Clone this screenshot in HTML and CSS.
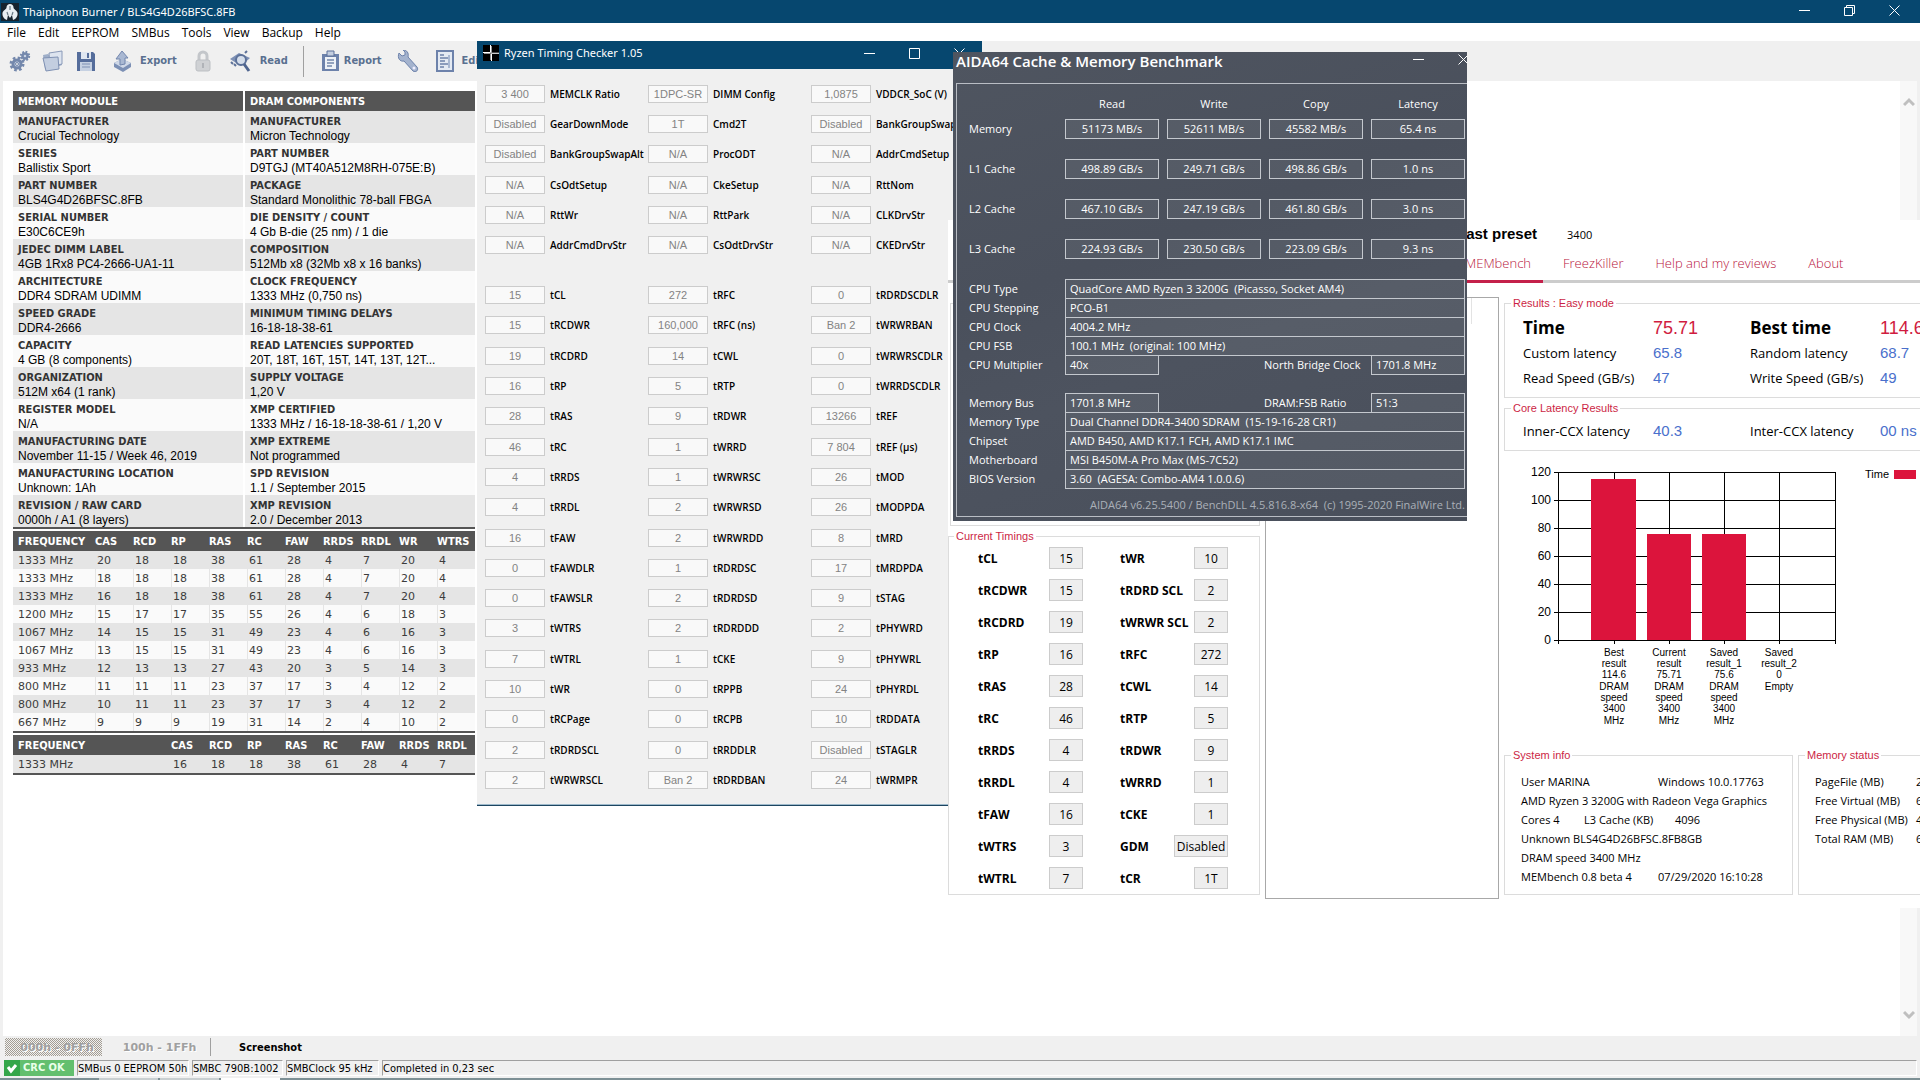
FILE: index.html
```html
<!DOCTYPE html>
<html lang="en">
<head>
<meta charset="utf-8">
<title>Thaiphoon Burner</title>
<link rel="stylesheet" href="styles.css">
</head>
<body>
<div class="desktop">

<main class="burner">
  <header class="titlebar">
    <svg class="app-icon" width="18" height="18" viewBox="0 0 18 18"><rect width="18" height="18" fill="#16232e"/><path d="M9 1c2 0 3.500 1.500 3.500 3.500S16 7 16.500 10 15 16 12 17l-1-5-2 3-2-3-1 5c-3-1-5-4-4.500-7S5.500 6.500 5.500 4.500 7 1 9 1z" fill="#e8eef2"/><path d="M9 3v4M6 9l1 3M12 9l-1 3" stroke="#6a7a86" stroke-width="1.200"/></svg>
    <h1>Thaiphoon Burner / BLS4G4D26BFSC.8FB</h1>
    <div class="win-buttons">
      <button aria-label="Minimize"><svg width="11" height="11"><path d="M0 5.500h11" stroke="#fff"/></svg></button>
      <button aria-label="Restore"><svg width="11" height="11" fill="none" stroke="#fff"><path d="M.5 2.500h8v8h-8zM2.500 2.500v-2h8v8h-2"/></svg></button>
      <button aria-label="Close"><svg width="11" height="11"><path d="M.5.5l10 10M10.500.5l-10 10" stroke="#fff"/></svg></button>
    </div>
  </header>
  <nav class="menu">
    <button>File</button><button>Edit</button><button>EEPROM</button><button>SMBus</button><button>Tools</button><button>View</button><button>Backup</button><button>Help</button>
  </nav>
  <div class="toolbar">
    <div class="tools-left">
      <button aria-label="Settings"><svg width="22" height="22" viewBox="0 0 22 22" fill="none" stroke="#7488ac"><circle cx="8" cy="14" r="4" stroke-width="3" fill="#c9d3e4"/><circle cx="8" cy="14" r="6" stroke-width="3" stroke-dasharray="2.500 2.200"/><circle cx="8" cy="14" r="1.500" fill="#eee"/><circle cx="16" cy="6" r="2.500" stroke-width="2.500" fill="#c9d3e4"/><circle cx="16" cy="6" r="4.200" stroke-width="2" stroke-dasharray="1.800 1.500"/></svg></button>
      <button aria-label="Open"><svg width="22" height="22" viewBox="0 0 22 22"><path d="M1 5l5-1 2 2 12-4v13L8 20 3 19z" fill="#9fafc9"/><path d="M7 3l13-2v13l-12 3z" fill="#dde4ef" stroke="#8a9ab8"/><path d="M1 8l15-1 1 12-13 2z" fill="#c3cee0" stroke="#7f91b3"/></svg></button>
      <button aria-label="Save"><svg width="22" height="22" viewBox="0 0 22 22"><path d="M2 2h16l2 2v17H2z" fill="#556d9b"/><path d="M6 2h10v7H6z" fill="#dfe6f0"/><path d="M12 3h2v5h-2z" fill="#556d9b"/><path d="M5 12h12v9H5z" fill="#c6d1e2"/><path d="M7 14h8M7 17h8" stroke="#7e91b4"/></svg></button>
    </div>
    <button><svg width="22" height="22" viewBox="0 0 22 22"><path d="M2 13l8-4 9 4v4l-8 5-9-5z" fill="#7c90b5"/><path d="M2 13l8-4 9 4-8 5z" fill="#cfd8e7"/><path d="M10 1l6 7h-3v6l-5 1V9H4z" fill="#a9b8d2" stroke="#7387ae"/></svg><span>Export</span></button>
    <button aria-label="Lock"><svg width="22" height="22" viewBox="0 0 22 22"><path d="M7 11V6a4 4 0 018 0v5" fill="none" stroke="#c3c6ca" stroke-width="3"/><rect x="4" y="10" width="14" height="11" rx="2" fill="#cfd1d4" stroke="#bcbfc3"/><path d="M11 13v5" stroke="#b0b3b8" stroke-width="2"/></svg></button>
    <button class="loose"><svg width="22" height="22" viewBox="0 0 22 22"><path d="M1 9l9-6 11 5-9 8z" fill="#7d90b5"/><path d="M2 12l2 2m1 0l2 2M16 3l2-2" stroke="#5c7199" stroke-width="2"/><circle cx="12" cy="10" r="5" fill="#d5deeb" stroke="#5c7199" stroke-width="2"/><path d="M15 14l5 7" stroke="#4f658f" stroke-width="3"/></svg><span>Read</span></button>
    <i class="sep"></i>
    <button class="tight"><svg width="22" height="22" viewBox="0 0 22 22"><rect x="3" y="4" width="17" height="17" fill="#6d82ab"/><path d="M6 7h11v12H6z" fill="#eef2f7"/><path d="M8 1h7v5H8z" fill="#c3cee0" stroke="#5c7199"/><path d="M8 10h7M8 13h7M8 16h5" stroke="#7488ac" stroke-width="1.500"/></svg><span>Report</span></button>
    <button aria-label="Tools"><svg width="22" height="22" viewBox="0 0 22 22"><path d="M2 3l3 3 3-1V2L6 0c4 0 6 3 5 7l9 10c2 3-1 6-4 4L7 11C3 12 0 8 2 3z" fill="#a4b3ce" stroke="#6d82ab"/><circle cx="17" cy="18" r="1.500" fill="#eef"/></svg></button>
    <button><svg width="22" height="22" viewBox="0 0 22 22"><path d="M3 1h16v20H3z" fill="#e4eaf3" stroke="#6d82ab" stroke-width="2"/><path d="M6 5h4M6 8h9M6 11h5M6 14h8M6 17h4" stroke="#6d82ab" stroke-width="1.500"/><path d="M15 5v13" stroke="#a9b8d2" stroke-width="2"/></svg><span>Editor</span></button>
  </div>

  <div class="workspace">
    <div class="report">
      <table class="module">
        <thead><tr><th>MEMORY MODULE</th><th>DRAM COMPONENTS</th></tr></thead>
        <tbody>
          <tr><td><b>MANUFACTURER</b>Crucial Technology</td><td><b>MANUFACTURER</b>Micron Technology</td></tr>
          <tr><td><b>SERIES</b>Ballistix Sport</td><td><b>PART NUMBER</b>D9TGJ (MT40A512M8RH-075E:B)</td></tr>
          <tr><td><b>PART NUMBER</b>BLS4G4D26BFSC.8FB</td><td><b>PACKAGE</b>Standard Monolithic 78-ball FBGA</td></tr>
          <tr><td><b>SERIAL NUMBER</b>E30C6CE9h</td><td><b>DIE DENSITY / COUNT</b>4 Gb B-die (25 nm) / 1 die</td></tr>
          <tr><td><b>JEDEC DIMM LABEL</b>4GB 1Rx8 PC4-2666-UA1-11</td><td><b>COMPOSITION</b>512Mb x8 (32Mb x8 x 16 banks)</td></tr>
          <tr><td><b>ARCHITECTURE</b>DDR4 SDRAM UDIMM</td><td><b>CLOCK FREQUENCY</b>1333 MHz (0,750 ns)</td></tr>
          <tr><td><b>SPEED GRADE</b>DDR4-2666</td><td><b>MINIMUM TIMING DELAYS</b>16-18-18-38-61</td></tr>
          <tr><td><b>CAPACITY</b>4 GB (8 components)</td><td><b>READ LATENCIES SUPPORTED</b>20T, 18T, 16T, 15T, 14T, 13T, 12T...</td></tr>
          <tr><td><b>ORGANIZATION</b>512M x64 (1 rank)</td><td><b>SUPPLY VOLTAGE</b>1,20 V</td></tr>
          <tr><td><b>REGISTER MODEL</b>N/A</td><td><b>XMP CERTIFIED</b>1333 MHz / 16-18-18-38-61 / 1,20 V</td></tr>
          <tr><td><b>MANUFACTURING DATE</b>November 11-15 / Week 46, 2019</td><td><b>XMP EXTREME</b>Not programmed</td></tr>
          <tr><td><b>MANUFACTURING LOCATION</b>Unknown: 1Ah</td><td><b>SPD REVISION</b>1.1 / September 2015</td></tr>
          <tr><td><b>REVISION / RAW CARD</b>0000h / A1 (8 layers)</td><td><b>XMP REVISION</b>2.0 / December 2013</td></tr>
        </tbody>
      </table>
      <table class="freq">
        <thead><tr><th>FREQUENCY</th><th>CAS</th><th>RCD</th><th>RP</th><th>RAS</th><th>RC</th><th>FAW</th><th>RRDS</th><th>RRDL</th><th>WR</th><th>WTRS</th></tr></thead>
        <tbody>
          <tr><td>1333 MHz</td><td>20</td><td>18</td><td>18</td><td>38</td><td>61</td><td>28</td><td>4</td><td>7</td><td>20</td><td>4</td></tr>
          <tr><td>1333 MHz</td><td>18</td><td>18</td><td>18</td><td>38</td><td>61</td><td>28</td><td>4</td><td>7</td><td>20</td><td>4</td></tr>
          <tr><td>1333 MHz</td><td>16</td><td>18</td><td>18</td><td>38</td><td>61</td><td>28</td><td>4</td><td>7</td><td>20</td><td>4</td></tr>
          <tr><td>1200 MHz</td><td>15</td><td>17</td><td>17</td><td>35</td><td>55</td><td>26</td><td>4</td><td>6</td><td>18</td><td>3</td></tr>
          <tr><td>1067 MHz</td><td>14</td><td>15</td><td>15</td><td>31</td><td>49</td><td>23</td><td>4</td><td>6</td><td>16</td><td>3</td></tr>
          <tr><td>1067 MHz</td><td>13</td><td>15</td><td>15</td><td>31</td><td>49</td><td>23</td><td>4</td><td>6</td><td>16</td><td>3</td></tr>
          <tr><td>933 MHz</td><td>12</td><td>13</td><td>13</td><td>27</td><td>43</td><td>20</td><td>3</td><td>5</td><td>14</td><td>3</td></tr>
          <tr><td>800 MHz</td><td>11</td><td>11</td><td>11</td><td>23</td><td>37</td><td>17</td><td>3</td><td>4</td><td>12</td><td>2</td></tr>
          <tr><td>800 MHz</td><td>10</td><td>11</td><td>11</td><td>23</td><td>37</td><td>17</td><td>3</td><td>4</td><td>12</td><td>2</td></tr>
          <tr><td>667 MHz</td><td>9</td><td>9</td><td>9</td><td>19</td><td>31</td><td>14</td><td>2</td><td>4</td><td>10</td><td>2</td></tr>
        </tbody>
      </table>
      <table class="freq xmp">
        <thead><tr><th>FREQUENCY</th><th>CAS</th><th>RCD</th><th>RP</th><th>RAS</th><th>RC</th><th>FAW</th><th>RRDS</th><th>RRDL</th></tr></thead>
        <tbody><tr><td>1333 MHz</td><td>16</td><td>18</td><td>18</td><td>38</td><td>61</td><td>28</td><td>4</td><td>7</td></tr></tbody>
      </table>
    </div>
    <div class="scrollbar">
      <svg width="12" height="10"><path d="M1 8l5-5 5 5" fill="none" stroke="#bfbfbf" stroke-width="3"/></svg>
      <svg width="12" height="10"><path d="M1 2l5 5 5-5" fill="none" stroke="#bfbfbf" stroke-width="3"/></svg>
    </div>
  </div>

  <div class="pages">
    <button class="page pressed" disabled>000h - 0FFh</button>
    <button class="page" disabled>100h - 1FFh</button>
    <i class="sep"></i>
    <button class="page shot">Screenshot</button>
  </div>
  <footer class="status">
    <span class="crc"><svg width="16" height="16"><rect width="16" height="16" fill="#35a64a"/><path d="M4 7l3 4 5-6" fill="none" stroke="#fff" stroke-width="3"/></svg>CRC OK</span>
    <span class="cell c1">SMBus 0 EEPROM 50h</span>
    <span class="cell c2">SMBC 790B:1002</span>
    <span class="cell c3">SMBClock 95 kHz</span>
    <span class="cell c4">Completed in 0,23 sec</span>
  </footer>
  <div class="taskbar"><i></i><i></i><i class="active"></i></div>
</main>

<section class="rtc">
  <header class="titlebar">
    <svg class="app-icon" width="16" height="16"><rect width="16" height="16" fill="#000"/><path d="M7.500 0v7.500H0M16 8.500H8.500V16" fill="none" stroke="#fff" /><path d="M8.500 1v7H16M7.500 15V8.500H1" fill="none" stroke="#999"/></svg>
    <h2>Ryzen Timing Checker 1.05</h2>
    <div class="win-buttons">
      <button aria-label="Minimize"><svg width="11" height="11"><path d="M0 5.500h11" stroke="#fff"/></svg></button>
      <button aria-label="Maximize"><svg width="11" height="11"><path d="M.5.5h10v10H.5z" fill="none" stroke="#fff"/></svg></button>
      <button aria-label="Close"><svg width="11" height="11"><path d="M.5.5l10 10M10.500.5l-10 10" stroke="#fff"/></svg></button>
    </div>
  </header>
  <div class="fields config">
    <label><input value="3 400" disabled>MEMCLK Ratio</label><label><input value="1DPC-SR" disabled>DIMM Config</label><label><input value="1,0875" disabled>VDDCR_SoC (V)</label>
    <label><input value="Disabled" disabled>GearDownMode</label><label><input value="1T" disabled>Cmd2T</label><label><input value="Disabled" disabled>BankGroupSwap</label>
    <label><input value="Disabled" disabled>BankGroupSwapAlt</label><label><input value="N/A" disabled>ProcODT</label><label><input value="N/A" disabled>AddrCmdSetup</label>
    <label><input value="N/A" disabled>CsOdtSetup</label><label><input value="N/A" disabled>CkeSetup</label><label><input value="N/A" disabled>RttNom</label>
    <label><input value="N/A" disabled>RttWr</label><label><input value="N/A" disabled>RttPark</label><label><input value="N/A" disabled>CLKDrvStr</label>
    <label><input value="N/A" disabled>AddrCmdDrvStr</label><label><input value="N/A" disabled>CsOdtDrvStr</label><label><input value="N/A" disabled>CKEDrvStr</label>
  </div>
  <div class="fields timings">
    <label><input value="15" disabled>tCL</label><label><input value="272" disabled>tRFC</label><label><input value="0" disabled>tRDRDSCDLR</label>
    <label><input value="15" disabled>tRCDWR</label><label><input value="160,000" disabled>tRFC (ns)</label><label><input value="Ban 2" disabled>tWRWRBAN</label>
    <label><input value="19" disabled>tRCDRD</label><label><input value="14" disabled>tCWL</label><label><input value="0" disabled>tWRWRSCDLR</label>
    <label><input value="16" disabled>tRP</label><label><input value="5" disabled>tRTP</label><label><input value="0" disabled>tWRRDSCDLR</label>
    <label><input value="28" disabled>tRAS</label><label><input value="9" disabled>tRDWR</label><label><input value="13266" disabled>tREF</label>
    <label><input value="46" disabled>tRC</label><label><input value="1" disabled>tWRRD</label><label><input value="7 804" disabled>tREF (µs)</label>
    <label><input value="4" disabled>tRRDS</label><label><input value="1" disabled>tWRWRSC</label><label><input value="26" disabled>tMOD</label>
    <label><input value="4" disabled>tRRDL</label><label><input value="2" disabled>tWRWRSD</label><label><input value="26" disabled>tMODPDA</label>
    <label><input value="16" disabled>tFAW</label><label><input value="2" disabled>tWRWRDD</label><label><input value="8" disabled>tMRD</label>
    <label><input value="0" disabled>tFAWDLR</label><label><input value="1" disabled>tRDRDSC</label><label><input value="17" disabled>tMRDPDA</label>
    <label><input value="0" disabled>tFAWSLR</label><label><input value="2" disabled>tRDRDSD</label><label><input value="9" disabled>tSTAG</label>
    <label><input value="3" disabled>tWTRS</label><label><input value="2" disabled>tRDRDDD</label><label><input value="2" disabled>tPHYWRD</label>
    <label><input value="7" disabled>tWTRL</label><label><input value="1" disabled>tCKE</label><label><input value="9" disabled>tPHYWRL</label>
    <label><input value="10" disabled>tWR</label><label><input value="0" disabled>tRPPB</label><label><input value="24" disabled>tPHYRDL</label>
    <label><input value="0" disabled>tRCPage</label><label><input value="0" disabled>tRCPB</label><label><input value="10" disabled>tRDDATA</label>
    <label><input value="2" disabled>tRDRDSCL</label><label><input value="0" disabled>tRRDDLR</label><label><input value="Disabled" disabled>tSTAGLR</label>
    <label><input value="2" disabled>tWRWRSCL</label><label><input value="Ban 2" disabled>tRDRDBAN</label><label><input value="24" disabled>tWRMPR</label>
  </div>
</section>

<section class="membench">
  <div class="preset"><strong>Last preset</strong><span>3400</span></div>
  <nav class="tabs"><a class="current" href="#">MEMbench</a><a href="#">FreezKiller</a><a href="#">Help and my reviews</a><a href="#">About</a></nav>
  <div class="bench-body">
    <div class="col-timings">
      <div class="blank-group"></div>
      <fieldset class="current-timings">
        <legend>Current Timings</legend>
        <label for="t1">tCL</label><input id="t1" value="15" readonly><label for="u1">tWR</label><input id="u1" value="10" readonly>
        <label for="t2">tRCDWR</label><input id="t2" value="15" readonly><label for="u2">tRDRD SCL</label><input id="u2" value="2" readonly>
        <label for="t3">tRCDRD</label><input id="t3" value="19" readonly><label for="u3">tWRWR SCL</label><input id="u3" value="2" readonly>
        <label for="t4">tRP</label><input id="t4" value="16" readonly><label for="u4">tRFC</label><input id="u4" value="272" readonly>
        <label for="t5">tRAS</label><input id="t5" value="28" readonly><label for="u5">tCWL</label><input id="u5" value="14" readonly>
        <label for="t6">tRC</label><input id="t6" value="46" readonly><label for="u6">tRTP</label><input id="u6" value="5" readonly>
        <label for="t7">tRRDS</label><input id="t7" value="4" readonly><label for="u7">tRDWR</label><input id="u7" value="9" readonly>
        <label for="t8">tRRDL</label><input id="t8" value="4" readonly><label for="u8">tWRRD</label><input id="u8" value="1" readonly>
        <label for="t9">tFAW</label><input id="t9" value="16" readonly><label for="u9">tCKE</label><input id="u9" value="1" readonly>
        <label for="t10">tWTRS</label><input id="t10" value="3" readonly><label for="u10">GDM</label><input id="u10" class="wide" value="Disabled" readonly>
        <label for="t11">tWTRL</label><input id="t11" value="7" readonly><label for="u11">tCR</label><input id="u11" value="1T" readonly>
      </fieldset>
    </div>
    <div class="list-box"><div class="list-head"></div></div>
    <div class="col-results">
      <fieldset class="results">
        <legend>Results : Easy mode</legend>
        <b>Time</b><em class="big">75.71</em><b>Best time</b><em class="big">114.6</em>
        <span>Custom latency</span><em>65.8</em><span>Random latency</span><em>68.7</em>
        <span>Read Speed (GB/s)</span><em>47</em><span>Write Speed (GB/s)</span><em>49</em>
      </fieldset>
      <fieldset class="results core">
        <legend>Core Latency Results</legend>
        <span>Inner-CCX latency</span><em>40.3</em><span>Inter-CCX latency</span><em>00 ns</em>
      </fieldset>
      <svg class="chart" height="298" role="img" aria-label="Time by result">
        <path d="M50 21.500H331.500M50 49.500H331.500M50 77.500H331.500M50 105.500H331.500M50 133.500H331.500M50 161.500H331.500M50 189.500H331.500M54.500 21V193M110.500 21V193M165.500 21V193M220.500 21V193M275.500 21V193M331.500 21V193" stroke="#000" fill="none"/>
        <g fill="#dc143c"><path d="M87 28h45v161H87zM143 83h44v106h-44zM198 83h44v106h-44zM390 19h22v9h-22z"/></g>
        <g class="axis"><text x="47" y="25">120</text><text x="47" y="53">100</text><text x="47" y="81">80</text><text x="47" y="109">60</text><text x="47" y="137">40</text><text x="47" y="165">20</text><text x="47" y="193">0</text></g>
        <text class="key" x="361" y="27">Time</text>
        <g class="cat">
          <text x="110" y="205"><tspan x="110">Best</tspan><tspan x="110" dy="11">result</tspan><tspan x="110" dy="11">114.6</tspan><tspan x="110" dy="12">DRAM</tspan><tspan x="110" dy="11">speed</tspan><tspan x="110" dy="11">3400</tspan><tspan x="110" dy="12">MHz</tspan></text>
          <text x="165" y="205"><tspan x="165">Current</tspan><tspan x="165" dy="11">result</tspan><tspan x="165" dy="11">75.71</tspan><tspan x="165" dy="12">DRAM</tspan><tspan x="165" dy="11">speed</tspan><tspan x="165" dy="11">3400</tspan><tspan x="165" dy="12">MHz</tspan></text>
          <text x="220" y="205"><tspan x="220">Saved</tspan><tspan x="220" dy="11">result_1</tspan><tspan x="220" dy="11">75.6</tspan><tspan x="220" dy="12">DRAM</tspan><tspan x="220" dy="11">speed</tspan><tspan x="220" dy="11">3400</tspan><tspan x="220" dy="12">MHz</tspan></text>
          <text x="275" y="205"><tspan x="275">Saved</tspan><tspan x="275" dy="11">result_2</tspan><tspan x="275" dy="11">0</tspan><tspan x="275" dy="12">Empty</tspan></text>
        </g>
      </svg>
      <div class="info-groups">
        <fieldset class="sys">
          <legend>System info</legend>
          <p><span class="half">User MARINA</span><span>Windows 10.0.17763</span></p>
          <p>AMD Ryzen 3 3200G with Radeon Vega Graphics</p>
          <p><span class="cores">Cores 4</span><span class="cache">L3 Cache (KB)</span><span>4096</span></p>
          <p>Unknown BLS4G4D26BFSC.8FB8GB</p>
          <p>DRAM speed 3400 MHz</p>
          <p><span class="half">MEMbench 0.8 beta 4</span><span>07/29/2020 16:10:28</span></p>
        </fieldset>
        <fieldset class="sys mem">
          <legend>Memory status</legend>
          <p><span>PageFile (MB)</span><span>2</span></p>
          <p><span>Free Virtual (MB)</span><span>6</span></p>
          <p><span>Free Physical (MB)</span><span>4</span></p>
          <p><span>Total RAM (MB)</span><span>6</span></p>
        </fieldset>
      </div>
    </div>
  </div>
</section>

<section class="aida">
  <header>
    <h2>AIDA64 Cache &amp; Memory Benchmark</h2>
    <div class="win-buttons">
      <button aria-label="Minimize"><svg width="11" height="11"><path d="M0 5.500h11" stroke="#fff"/></svg></button>
      <button aria-label="Close"><svg width="11" height="11"><path d="M.5.5l10 10M10.500.5l-10 10" stroke="#fff"/></svg></button>
    </div>
  </header>
  <div class="panel">
    <table>
      <thead><tr><th></th><th>Read</th><th>Write</th><th>Copy</th><th>Latency</th></tr></thead>
      <tbody>
        <tr><th>Memory</th><td><span>51173 MB/s</span></td><td><span>52611 MB/s</span></td><td><span>45582 MB/s</span></td><td><span>65.4 ns</span></td></tr>
        <tr><th>L1 Cache</th><td><span>498.89 GB/s</span></td><td><span>249.71 GB/s</span></td><td><span>498.86 GB/s</span></td><td><span>1.0 ns</span></td></tr>
        <tr><th>L2 Cache</th><td><span>467.10 GB/s</span></td><td><span>247.19 GB/s</span></td><td><span>461.80 GB/s</span></td><td><span>3.0 ns</span></td></tr>
        <tr><th>L3 Cache</th><td><span>224.93 GB/s</span></td><td><span>230.50 GB/s</span></td><td><span>223.09 GB/s</span></td><td><span>9.3 ns</span></td></tr>
      </tbody>
    </table>
    <div class="specs">
      <div><span class="k">CPU Type</span><span class="v">QuadCore AMD Ryzen 3 3200G&nbsp; (Picasso, Socket AM4)</span></div>
      <div><span class="k">CPU Stepping</span><span class="v">PCO-B1</span></div>
      <div><span class="k">CPU Clock</span><span class="v">4004.2 MHz</span></div>
      <div><span class="k">CPU FSB</span><span class="v">100.1 MHz&nbsp; (original: 100 MHz)</span></div>
      <div class="pair"><span class="k">CPU Multiplier</span><span class="v">40x</span><span class="k2">North Bridge Clock</span><span class="v">1701.8 MHz</span></div>
    </div>
    <div class="specs">
      <div class="pair"><span class="k">Memory Bus</span><span class="v">1701.8 MHz</span><span class="k2">DRAM:FSB Ratio</span><span class="v">51:3</span></div>
      <div><span class="k">Memory Type</span><span class="v">Dual Channel DDR4-3400 SDRAM&nbsp; (15-19-16-28 CR1)</span></div>
      <div><span class="k">Chipset</span><span class="v">AMD B450, AMD K17.1 FCH, AMD K17.1 IMC</span></div>
      <div><span class="k">Motherboard</span><span class="v">MSI B450M-A Pro Max (MS-7C52)</span></div>
      <div><span class="k">BIOS Version</span><span class="v">3.60&nbsp; (AGESA: Combo-AM4 1.0.0.6)</span></div>
    </div>
    <p class="credit">AIDA64 v6.25.5400 / BenchDLL 4.5.816.8-x64&nbsp; (c) 1995-2020 FinalWire Ltd.</p>
  </div>
</section>

</div>
</body>
</html>
```
FILE: styles.css
```css
* { box-sizing: border-box; }
body { margin: 0; font-family: "Open Sans", "Noto Sans", sans-serif; font-size: 11px; color: #000; }
button { border: 0; padding: 0; background: none; font: inherit; color: inherit; }
input { font: inherit; padding: 0; margin: 0; text-align: center; min-width: 0; }
h1, h2, p { margin: 0; font-weight: 400; font-size: inherit; }
fieldset { margin: 0; min-width: 0; border: 1px solid #dcdcdc; padding: 0; }
svg { display: block; flex: none; }

.desktop { position: relative; min-height: 100vh; overflow: hidden; display: flex; }

/* Window frames */
.titlebar { display: flex; align-items: center; background: #06476f; color: #fff; font-family: "Noto Sans", sans-serif; }
.titlebar h1, .titlebar h2 { flex: 1; }
.win-buttons { display: flex; }
.win-buttons button { width: 45px; height: 20px; display: flex; align-items: center; justify-content: center; }

/* Thaiphoon Burner */
.burner { flex: 1; display: flex; flex-direction: column; background: #f0f0f0; }
.burner .titlebar { height: 23px; padding: 0 3px 0 1px; gap: 4px; }
.burner .win-buttons { align-self: flex-start; }
.menu { display: flex; gap: 12px; height: 18px; padding: 1px 0 0 7px; background: #fff; font-size: 12px; line-height: 18px; }
.toolbar { display: flex; align-items: center; gap: 15px; height: 40px; padding-left: 9px; font: 700 11px/14px "DejaVu Sans Condensed", "DejaVu Sans", sans-serif; color: #5a7090; }
.tools-left { display: flex; gap: 11px; }
.toolbar button { display: flex; align-items: center; gap: 6px; }
.toolbar .tight { gap: 3px; }
.toolbar .loose { gap: 9px; }
.sep { width: 1px; align-self: stretch; margin: 5px 0 4px; background: #a0a0a0; }

.workspace { flex: 1; display: flex; margin: 0 3px; background: #fff; }
.report { flex: 1; padding: 10px; display: flex; flex-direction: column; gap: 2px; }
.scrollbar { width: 17px; background: #f8f8f8; display: flex; flex-direction: column; justify-content: space-between; align-items: center; padding: 16px 0; }

.report table { width: 462px; border-collapse: separate; border-spacing: 0; table-layout: fixed; border-bottom: 2px solid #555; }
.report th { height: 20px; padding: 2px 0 0; text-align: left; background: #555; color: #fff; font: 700 11px/18px "DejaVu Sans Condensed", "DejaVu Sans", sans-serif; }
.report td { padding: 2px 0 0; background: #fafafa; color: #3c3c3c; font: 11px/16px "DejaVu Sans", sans-serif; }
.report tr:nth-child(odd) td { background: #e5e5e5; }
.report .module th { padding-left: 5px; }
.report .module th:first-child { width: 230px; }
.report .module td { padding: 4px 0 0 5px; color: #000; font: 12px/14px "Liberation Sans", sans-serif; }
.module td + td, .module th + th { border-left: 2px solid #fff; }
.module b { display: block; color: #333; font: 700 11px/14px "DejaVu Sans Condensed", "DejaVu Sans", sans-serif; }
.freq th, .freq td { width: 38px; }
.report .freq th:first-child, .report .freq td:first-child { width: 82px; padding-left: 5px; }
.report .xmp th:first-child, .report .xmp td:first-child { width: 158px; }
.report .freq td + td { border-left: 1px solid #e5e5e5; padding-left: 1px; }
.report .freq th:first-child, .report .freq td:first-child { padding-left: 5px; }

.pages { display: flex; align-items: center; height: 22px; padding-left: 5px; font: 700 11px/18px "DejaVu Sans", sans-serif; }
.pages .sep { margin: 2px 0; }
.page { width: 97px; height: 18px; padding-top: 1px; }
.page:disabled { width: 108px; padding-left: 7px; color: #a0a0a0; text-shadow: 1px 1px #fff; }
.page.pressed:disabled { width: 97px; background: repeating-conic-gradient(#a39d93 0 25%, #f0f0f0 0 50%) 0 0 / 2px 2px; }
.page.shot { width: 119px; font-family: "DejaVu Sans Condensed", "DejaVu Sans", sans-serif; }

.status { display: flex; gap: 3px; height: 20px; padding: 2px 3px 2px 4px; font: 11px/16px "DejaVu Sans Condensed", "DejaVu Sans", sans-serif; }
.crc { width: 70px; display: flex; gap: 3px; background: #63bf6e; color: #eaffea; font-weight: 700; white-space: nowrap; }
.cell { border: 1px solid #fff; border-top-color: #a0a0a0; border-left-color: #a0a0a0; white-space: nowrap; }
.c1 { width: 112px; }
.c2 { width: 91px; }
.c3 { width: 93px; }
.c4 { flex: 1; }
.taskbar { height: 2px; padding-left: 99px; display: flex; gap: 2px; background: #7d9095; }
.taskbar i { width: 59px; background: #c9cfd1; }
.taskbar .active { background: #fff; }

/* Ryzen Timing Checker */
.rtc { position: absolute; left: 477px; top: 41px; width: 505px; padding-bottom: 16px; background: linear-gradient(#9db9cb, #9db9cb) bottom / 100% 1px no-repeat, #f0f0f0; border-bottom: 1px solid #1d4560; }
.rtc .titlebar { align-items: flex-start; height: 28px; padding-left: 6px; gap: 5px; }
.rtc .app-icon { margin-top: 4px; }
.rtc h2 { line-height: 24px; }
.rtc .win-buttons button { height: 24px; }
.fields { display: grid; grid-template-columns: repeat(3, 163px); align-content: space-between; padding-left: 8px; }
.fields label { display: flex; align-items: center; gap: 5px; height: 18px; white-space: nowrap; font: 600 10px/18px "Open Sans", "Noto Sans", sans-serif; }
.fields input { width: 60px; height: 18px; border: 1px solid #ccc; background: #f9f9f9; color: #838383; font: 11px/16px "Liberation Sans", sans-serif; }
.config { margin-top: 16px; height: 169px; }
.timings { margin-top: 32px; height: 503px; }

/* MEMbench */
.membench { position: absolute; left: 948px; right: 0; top: 220px; padding-bottom: 9px; background: #fff; overflow: hidden; }
.preset { display: flex; align-items: center; gap: 30px; height: 28px; margin-bottom: 2px; padding-left: 509px; white-space: nowrap; }
.preset strong { font: 700 15px/20px "Liberation Sans", sans-serif; }
.preset span { font-size: 11px; }
.tabs { display: flex; gap: 8px; padding-left: 505px; border-bottom: 3px solid #ccc; font-weight: 300; font-size: 13px; line-height: 27px; white-space: nowrap; }
.tabs a { padding: 0 12px 3px; margin-bottom: -3px; padding-top: 1px; margin-top: -1px; color: #b8143c; text-decoration: none; }
.tabs .current { border-bottom: 3px solid #c4204a; }
.bench-body { display: grid; grid-template-columns: 312px 234px 480px; column-gap: 5px; padding-top: 14px; }
.membench legend { margin-left: -12px; padding: 0 2px; font: 11px/12px "Liberation Sans", sans-serif; color: #cc1f45; }
.blank-group { margin: 6px 0 4px 2px; min-height: 223px; border: 1px solid #dcdcdc; }
.current-timings { display: grid; grid-template-columns: 71px 71px 74px 34px; row-gap: 10px; padding: 5px 0 5px 29px; }
.membench .current-timings legend { margin-left: -24px; }
.current-timings label { font-size: 12px; font-weight: 700; line-height: 24px; height: 22px; white-space: nowrap; }
.current-timings input { width: 34px; height: 22px; border: 1px solid #ccc; background: #eee; font-size: 12px; }
.current-timings .wide { width: 54px; justify-self: end; }
.list-box { border: 1px solid #a8a8a8; min-height: 602px; }
.list-head { height: 26px; margin: 0 26px 0 0; border-right: 1px solid #e3e3e3; }

.results { display: grid; grid-template-columns: 130px 97px 130px auto; grid-auto-rows: 25px; align-items: center; padding: 6px 0 7px 18px; font-size: 13px; white-space: nowrap; }
.results b { font-size: 17px; }
.results em { font: 15px/20px "Liberation Sans", sans-serif; color: #4a70cc; }
.results .big { font-size: 18px; color: #d01c40; }
.core { margin-top: 4px; padding-top: 4px; }
.chart { width: 100%; font-family: "Liberation Sans", sans-serif; }
.axis { font-size: 12px; text-anchor: end; }
.key { font-size: 11px; }
.cat { font-size: 10px; text-anchor: middle; }
.info-groups { display: grid; grid-template-columns: 289px 186px; gap: 5px; }
.sys { padding: 11px 0 8px 16px; }
.membench .sys legend { margin-left: -10px; }
.sys p { display: flex; line-height: 19px; white-space: nowrap; }
.half { width: 137px; }
.cores { width: 63px; }
.cache { width: 91px; }
.mem p span:first-child { width: 101px; }

/* AIDA64 */
.aida { position: absolute; left: 953px; top: 52px; width: 514px; padding: 0 0 4px 3px; overflow: hidden; color: #fff; background: linear-gradient(160deg, #4f5560, #4a505c 40%, #4d535f 60%, #494f5b); }
.aida header { display: flex; justify-content: space-between; height: 31px; margin-right: -19px; }
.aida .win-buttons button { height: 14px; }
.aida h2 { font-size: 15px; font-weight: 600; line-height: 18px; }
.panel { border: 1px solid #b9bdc4; border-right: 0; padding-bottom: 2px; }
.aida table { width: 516px; table-layout: fixed; border-collapse: separate; border-spacing: 8px 0; }
.aida th, .aida td { padding: 0; font-weight: 400; vertical-align: top; width: 94px; height: 40px; line-height: 20px; }
.aida th:first-child { width: 92px; padding-left: 4px; text-align: left; }
.aida thead th { height: 35px; padding-top: 10px; }
.aida td span { display: block; height: 20px; line-height: 18px; text-align: center; border: 1px solid #c4c8ce; background: rgba(255, 255, 255, .06); }
.specs { margin: 0 2px 19px 12px; }
.specs div { display: flex; height: 19px; line-height: 19px; white-space: nowrap; }
.specs .k { width: 96px; }
.specs .v { flex: 1; height: 20px; padding-left: 4px; line-height: 18px; border: 1px solid #c4c8ce; background: rgba(255, 255, 255, .06); }
.specs .pair .v { flex: 0 0 94px; }
.specs .k2 { width: 107px; margin-left: auto; }
.specs + .specs { margin-bottom: 0; }
.credit { margin: 8px 2px 0 0; text-align: right; line-height: 18px; color: #aab0b8; white-space: nowrap; }
```
